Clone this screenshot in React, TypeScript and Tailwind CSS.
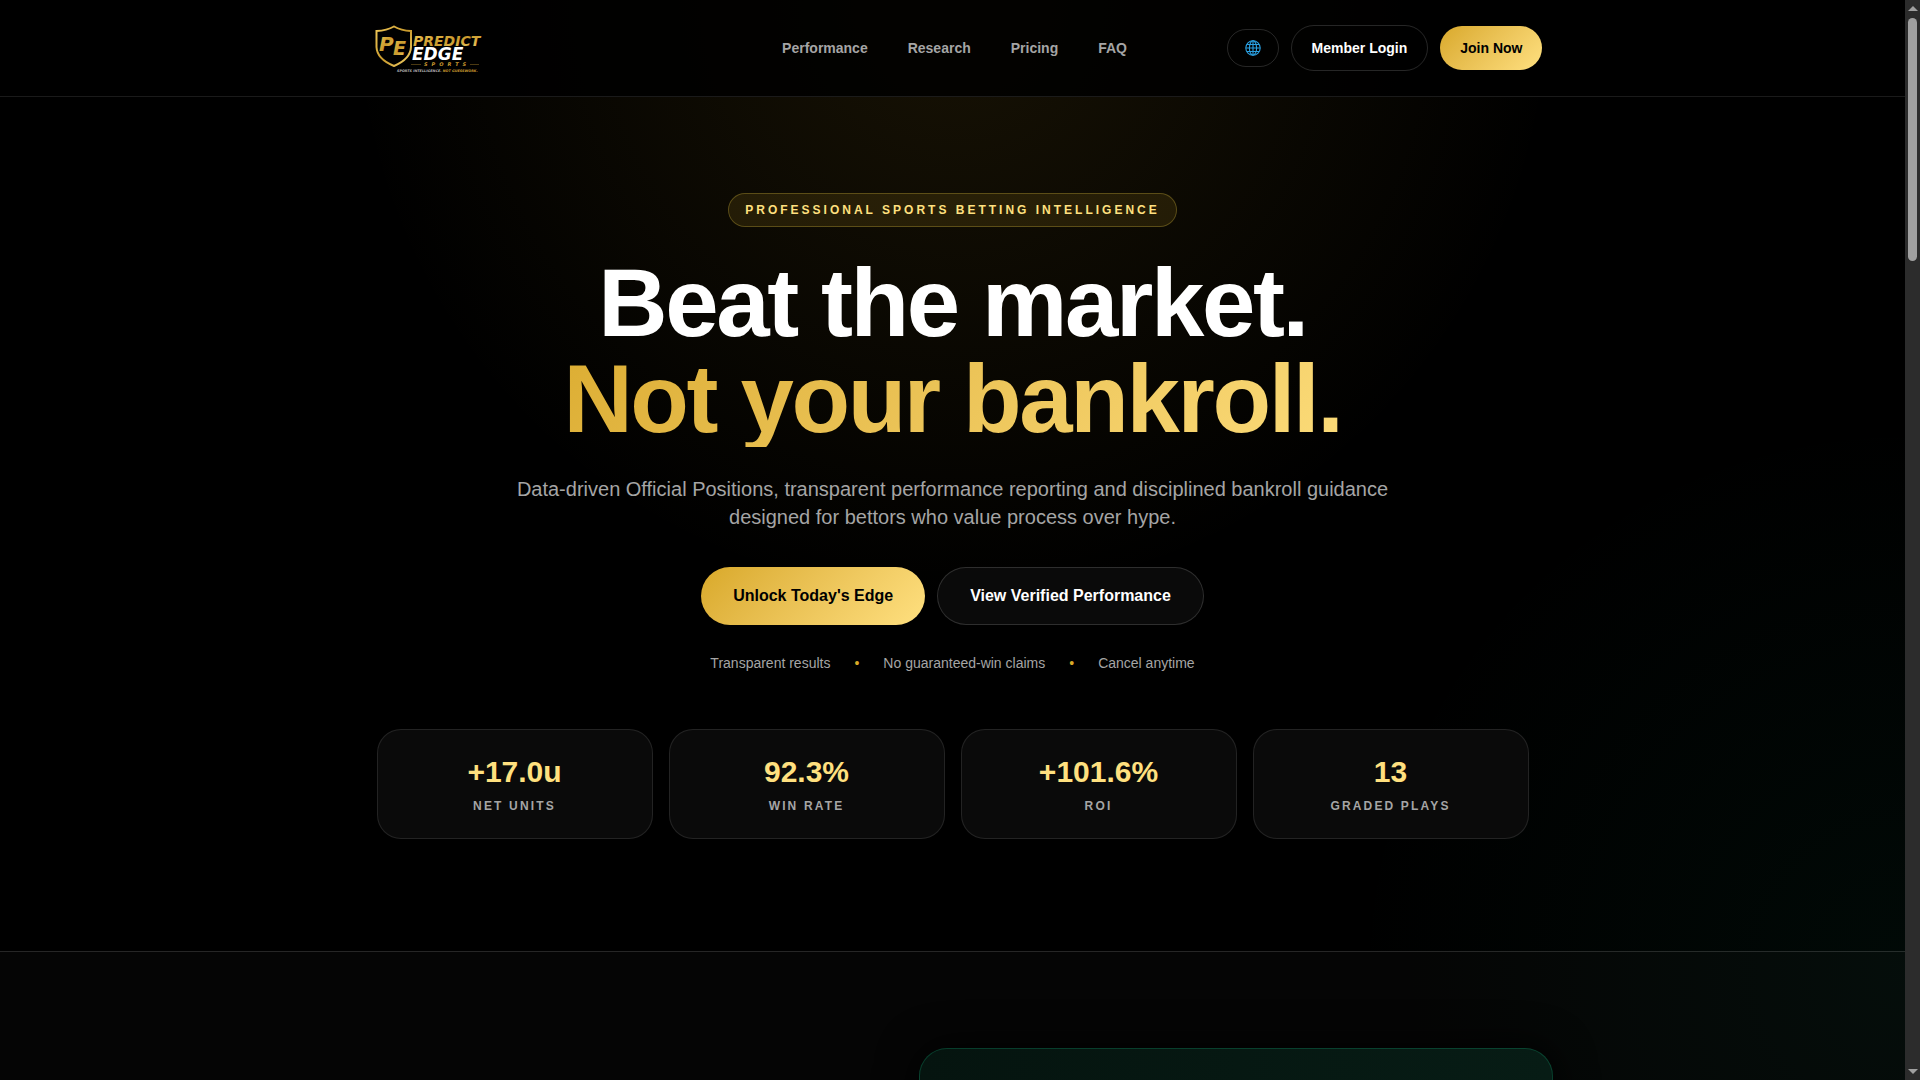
const navLinks = ["Performance", "Research", "Pricing", "FAQ"];

const stats = [
  { value: "+17.0u", label: "Net Units" },
  { value: "92.3%", label: "Win Rate" },
  { value: "+101.6%", label: "ROI" },
  { value: "13", label: "Graded Plays" },
];

const trust = ["Transparent results", "No guaranteed-win claims", "Cancel anytime"];

function Logo() {
  return (
    <svg viewBox="0 0 128 64" className="h-16 w-32" role="img" aria-label="Predict Edge Sports">
      <defs>
        <linearGradient id="gold" x1="0" y1="0" x2="1" y2="1">
          <stop offset="0" stopColor="#f0c95a" />
          <stop offset="0.5" stopColor="#c99a2c" />
          <stop offset="1" stopColor="#f2d06a" />
        </linearGradient>
      </defs>
      <path
        d="M13.500 15 Q24 14.500 31 10.500 Q38 14.500 48 15 V31 Q47.500 43 31 50 Q14 43 13.500 31 Z"
        fill="none"
        stroke="url(#gold)"
        strokeWidth="2"
      />
      <g fontFamily="DejaVu Sans, sans-serif" fontWeight="700" fontStyle="italic">
        <text x="16" y="35" fontSize="20" fill="url(#gold)">P</text>
        <text x="30" y="39" fontSize="19" fill="url(#gold)">E</text>
        <text x="50" y="30" fontSize="14" fill="url(#gold)">PREDICT</text>
        <text x="49" y="44" fontSize="17" fill="#fff">EDGE</text>
        <text x="61" y="50" fontSize="5" fill="#c9982e" letterSpacing="4">SPORTS</text>
        <text x="34" y="56" fontSize="3.4" fill="#b4b4b4">
          SPORTS INTELLIGENCE. <tspan fill="#c9982e">NOT GUESSWORK.</tspan>
        </text>
      </g>
      <path d="M48 48.500h10M107 48.500h9" stroke="#7d5f1e" strokeWidth="0.600" />
    </svg>
  );
}

function GlobeIcon() {
  return (
    <svg viewBox="0 0 18 16" className="h-4 w-[18px]" fill="none" stroke="#2a9fe0" strokeWidth="1.1">
      <circle cx="9" cy="8" r="7.200" />
      <ellipse cx="9" cy="8" rx="3.600" ry="7.200" />
      <path d="M9 .8v14.400M1.800 8h14.400M3 4.500h12M3 11.500h12" />
    </svg>
  );
}

function Header() {
  return (
    <header className="border-b border-white/10 bg-black/85">
      <div className="mx-auto flex h-24 max-w-[1180px] items-center justify-between">
        <a href="#" className="w-80">
          <Logo />
        </a>
        <nav className="flex gap-10 text-sm font-bold text-[#a5a5a5]">
          {navLinks.map((link) => (
            <a key={link} href={`#${link.toLowerCase()}`}>
              {link}
            </a>
          ))}
        </nav>
        <div className="flex items-center gap-3 text-sm leading-4 font-bold">
          <button aria-label="Language" className="rounded-full border border-white/15 px-4 py-[10px]">
            <GlobeIcon />
          </button>
          <a href="#login" className="rounded-full border border-white/15 px-5 py-[14px]">
            Member Login
          </a>
          <a
            href="#join"
            className="rounded-full bg-linear-135 from-[#d9a928] to-[#ffe07f] px-5 py-[14px] text-black"
          >
            Join Now
          </a>
        </div>
      </div>
    </header>
  );
}

function Hero() {
  return (
    <section className="border-b border-white/15 px-6 pt-24 pb-28 text-center">
      <p className="inline-block rounded-full border border-[#ffe04d]/25 bg-[#d9a928]/12 px-4 py-2 text-xs leading-4 font-bold tracking-[0.25em] text-[#ffe07f] uppercase">
        Professional Sports Betting Intelligence
      </p>
      <h1 className="mx-auto mt-7 max-w-[960px] text-8xl leading-none font-bold tracking-tight">
        Beat the market.
        <span className="block bg-linear-135 from-[#d9a928] to-[#ffe07f] bg-clip-text text-transparent">
          Not your bankroll.
        </span>
      </h1>
      <p className="mx-auto mt-7 max-w-[900px] text-xl leading-7 text-[#a5a5a5]">
        Data-driven Official Positions, transparent performance reporting and disciplined bankroll guidance
        designed for bettors who value process over hype.
      </p>
      <div className="mt-9 flex justify-center gap-3 leading-[18px] font-bold">
        <a
          href="#pricing"
          className="rounded-full bg-linear-135 from-[#d9a928] to-[#ffe07f] px-8 py-5 text-black"
        >
          Unlock Today's Edge
        </a>
        <a href="#performance" className="rounded-full border border-white/15 bg-white/4 px-8 py-[19px]">
          View Verified Performance
        </a>
      </div>
      <div className="mt-7 flex justify-center gap-6 text-sm text-[#a5a5a5]">
        {trust.map((item, i) => (
          <div key={item} className="flex gap-6">
            {i > 0 && <span className="text-[#d9a928]">•</span>}
            <span>{item}</span>
          </div>
        ))}
      </div>
      <div className="mx-auto mt-14 grid max-w-[1152px] grid-cols-4 gap-4">
        {stats.map((stat) => (
          <div key={stat.label} className="rounded-3xl border border-white/10 bg-[#0a0a0a] p-6">
            <div className="text-3xl font-bold text-[#ffe07f]">{stat.value}</div>
            <div className="mt-2 text-xs font-bold tracking-[0.18em] text-[#a5a5a5] uppercase">
              {stat.label}
            </div>
          </div>
        ))}
      </div>
    </section>
  );
}

function Research() {
  return (
    <section className="bg-white/2 pt-24">
      <div className="mx-auto flex max-w-[1200px] justify-end">
        <div className="h-96 w-[634px] rounded-[28px] border border-[#10b981]/25 bg-linear-to-r from-[#05140f] to-[#071c15] shadow-[0_0_40px_#000]" />
      </div>
    </section>
  );
}

function ScrollRail() {
  return (
    <div aria-hidden="true" className="flex flex-col items-center justify-between bg-[#2c2c2c] py-[6px]">
      <div className="flex flex-col items-center gap-[7px]">
        <svg viewBox="0 0 10 5" className="h-[5px] w-[10px]" fill="#a0a0a0">
          <path d="M0 5 5 0l5 5z" />
        </svg>
        <div className="h-[243px] w-[9px] rounded-full bg-[#a0a0a0]" />
      </div>
      <svg viewBox="0 0 10 5" className="h-[5px] w-[10px]" fill="#a0a0a0">
        <path d="M0 0h10L5 5z" />
      </svg>
    </div>
  );
}

export default function App() {
  return (
    <div className="grid h-screen grid-cols-[1fr_15px] overflow-hidden bg-black font-['Liberation_Sans',Arial,sans-serif] text-white">
      <div className="overflow-hidden bg-[radial-gradient(circle_at_50%_0%,rgba(217,169,40,0.11),transparent_42%),radial-gradient(circle_at_100%_90%,rgba(16,185,129,0.05),transparent_26%)]">
        <Header />
        <main>
          <Hero />
          <Research />
        </main>
      </div>
      <ScrollRail />
    </div>
  );
}
